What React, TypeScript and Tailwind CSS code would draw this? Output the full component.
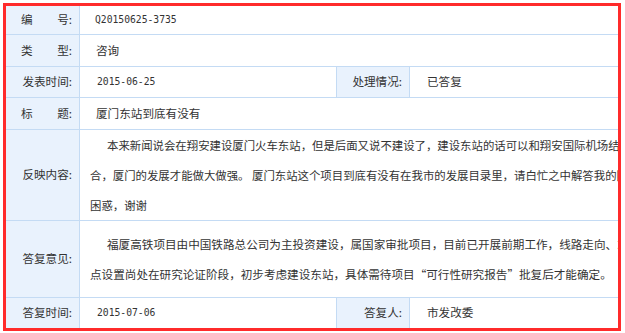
const LABEL_BG = "bg-[#e9f2fd]";

function Label({ children, w = "w-[74px]" }: { children: React.ReactNode; w?: string }) {
  return (
    <div className={`${w} ${LABEL_BG} shrink-0 border-r border-[#c4dbf4] flex items-center justify-end pr-[7px]`}>
      {children}
    </div>
  );
}

function Spread({ a, b }: { a: string; b: string }) {
  return (
    <span className="flex w-[51px] justify-between">
      <span>{a}</span>
      <span>{b}</span>
    </span>
  );
}

const mono = { fontFamily: '"DejaVu Sans Mono", monospace' };

export default function App() {
  return (
    <div className="w-[625px] h-[333px] bg-white p-[3px]" style={{ fontFamily: '"Noto Sans CJK SC", sans-serif' }}>
      <div className="w-[618px] h-[328px] border-[3px] border-[#ff2b2b] overflow-hidden text-[11.6px] text-[#333]">
        <div className="w-[700px] flex flex-col">
          <div className="h-[29px] flex border-b border-[#c4dbf4]">
            <Label>
              <Spread a="编" b="号:" />
            </Label>
            <div className="flex items-center pl-[15px] text-[9.7px]" style={mono}>Q20150625-3735</div>
          </div>

          <div className="h-[32px] flex border-b border-[#c4dbf4]">
            <Label>
              <Spread a="类" b="型:" />
            </Label>
            <div className="flex items-center pl-[16px]">咨询</div>
          </div>

          <div className="h-[31px] flex border-b border-[#c4dbf4]">
            <Label>发表时间:</Label>
            <div className="w-[256px] flex items-center pl-[17px] text-[9.7px]" style={mono}>2015-06-25</div>
            <div className={`w-[74px] ${LABEL_BG} border-l border-r border-[#c4dbf4] flex items-center justify-end pr-[7px]`}>
              处理情况:
            </div>
            <div className="flex items-center pl-[17px]">已答复</div>
          </div>

          <div className="h-[32px] flex border-b border-[#c4dbf4]">
            <Label>
              <Spread a="标" b="题:" />
            </Label>
            <div className="flex items-center pl-[16px]">厦门东站到底有没有</div>
          </div>

          <div className="h-[91px] flex border-b border-[#c4dbf4]">
            <Label>反映内容:</Label>
            <div className="flex flex-col justify-center pl-[10px] leading-[30px] whitespace-nowrap text-[11.4px]">
              <div className="pl-[17px]">本来新闻说会在翔安建设厦门火车东站，但是后面又说不建设了，建设东站的话可以和翔安国际机场结合，厦门</div>
              <div>合，厦门的发展才能做大做强。 厦门东站这个项目到底有没有在我市的发展目录里，请白忙之中解答我的困惑</div>
              <div>困惑，谢谢</div>
            </div>
          </div>

          <div className="h-[77px] flex border-b border-[#c4dbf4]">
            <Label>答复意见:</Label>
            <div className="flex flex-col justify-center pl-[10px] leading-[30px] whitespace-nowrap">
              <div className="pl-[17px]">福厦高铁项目由中国铁路总公司为主投资建设，属国家审批项目，目前已开展前期工作，线路走向、站</div>
              <div>点设置尚处在研究论证阶段，初步考虑建设东站，具体需待项目“可行性研究报告”批复后才能确定。</div>
            </div>
          </div>

          <div className="h-[30px] flex">
            <Label>答复时间:</Label>
            <div className="w-[256px] flex items-center pl-[17px] text-[9.7px]" style={mono}>2015-07-06</div>
            <div className={`w-[74px] ${LABEL_BG} border-l border-r border-[#c4dbf4] flex items-center justify-end pr-[7px]`}>
              答复人:
            </div>
            <div className="flex items-center pl-[17px]">市发改委</div>
          </div>
        </div>
      </div>
    </div>
  );
}
